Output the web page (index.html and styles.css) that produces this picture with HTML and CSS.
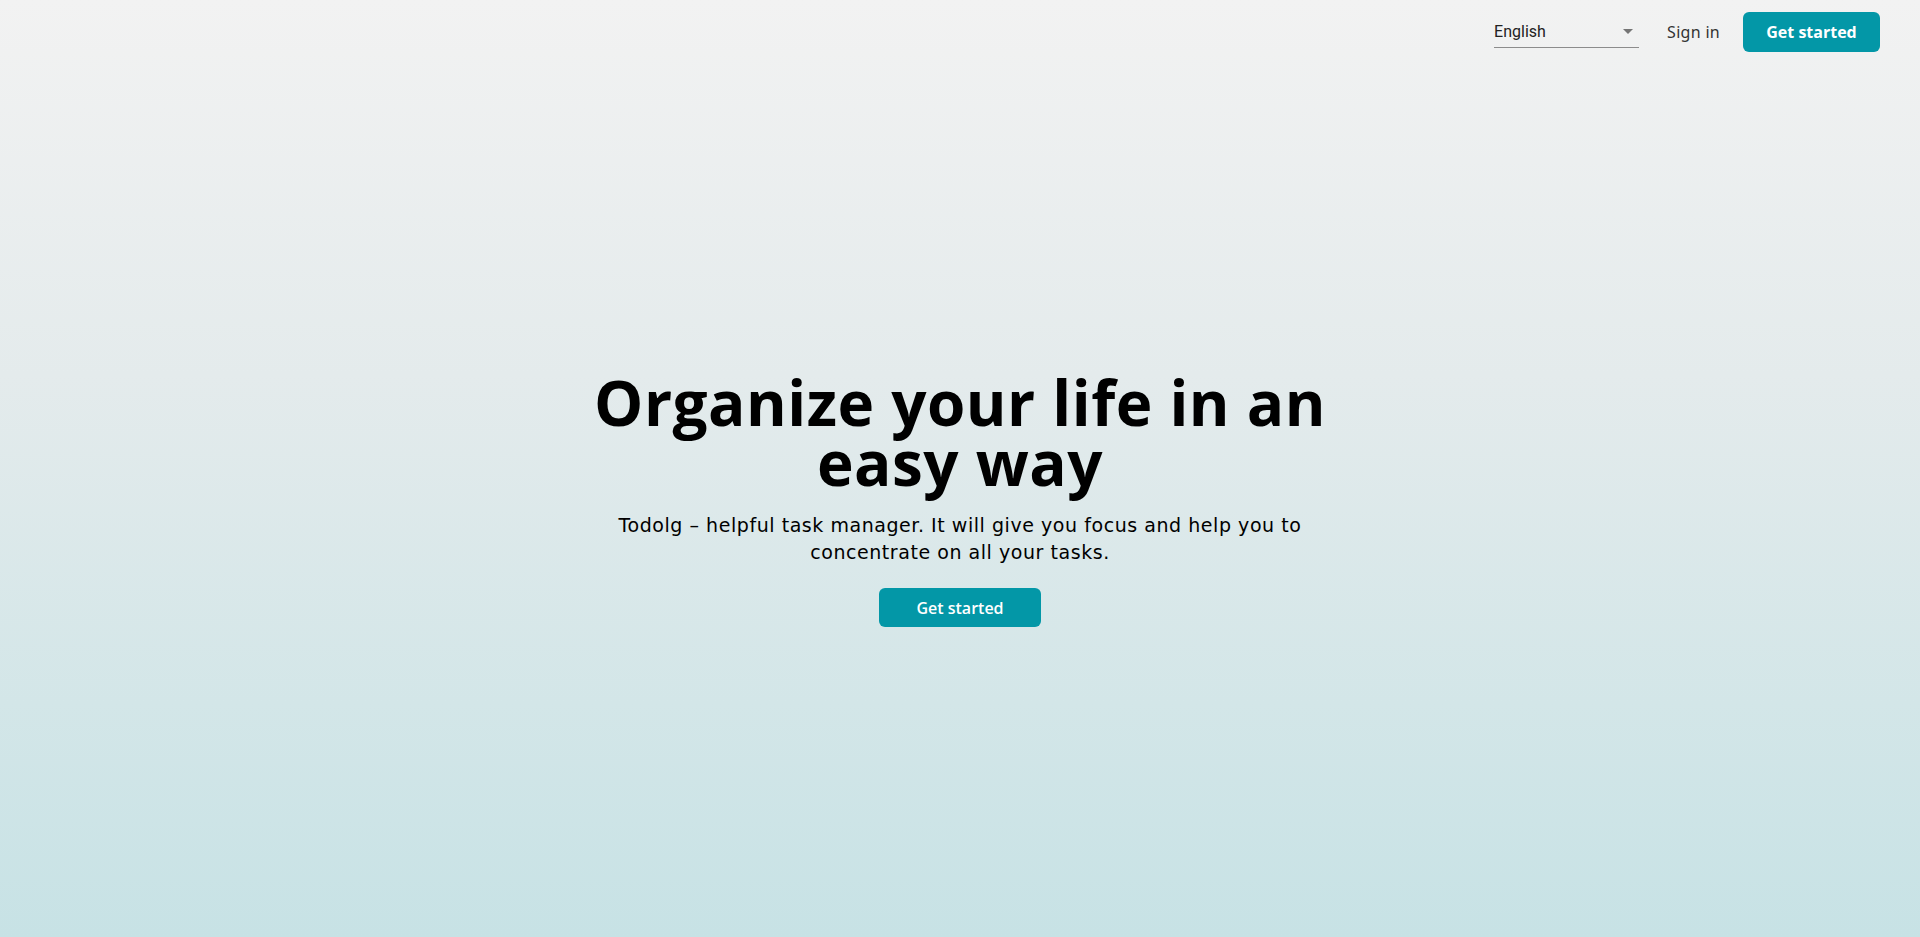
FILE: index.html
```html
<!DOCTYPE html>
<html lang="en">
<head>
<meta charset="utf-8">
<title>Todolg</title>
<link rel="stylesheet" href="styles.css">
</head>
<body>
<div class="page">
  <header class="topbar">
    <div class="lang-select">
      <span class="lang-value">English</span>
      <svg class="lang-arrow" width="10" height="5" viewBox="0 0 10 5"><path d="M0 0 L10 0 L5 5 Z" fill="#757575"/></svg>
    </div>
    <a class="signin" href="#">Sign in</a>
    <a class="btn btn-top" href="#">Get started</a>
  </header>
  <main class="hero">
    <h1 class="hero-title">Organize your life in an<br>easy way</h1>
    <p class="hero-text">Todolg – helpful task manager. It will give you focus and help you to<br>concentrate on all your tasks.</p>
    <a class="btn btn-hero" href="#">Get started</a>
  </main>
</div>
</body>
</html>
```
FILE: styles.css
```css
html, body {
  margin: 0;
  padding: 0;
  height: 100%;
}
body {
  font-family: "Open Sans", "Liberation Sans", sans-serif;
  color: #000;
  background: linear-gradient(180deg, #f2f2f2 0%, #e4ebec 40%, #d3e6e8 75%, #c7e2e5 100%);
}
.page {
  height: 100%;
  display: flex;
  flex-direction: column;
}
.topbar {
  height: 64px;
  box-sizing: border-box;
  padding: 12px 40px 0 0;
  display: flex;
  justify-content: flex-end;
  align-items: flex-start;
}
.lang-select {
  width: 145px;
  height: 36px;
  box-sizing: border-box;
  border-bottom: 1px solid #8c8c8c;
  display: flex;
  align-items: center;
  justify-content: space-between;
  padding: 4px 6px 0 0;
  margin-right: 28px;
  font-family: Roboto, "Liberation Sans", sans-serif;
  font-size: 16px;
  color: #222;
}
.signin {
  font-family: "Noto Sans", "Liberation Sans", sans-serif;
  font-size: 16px;
  color: #333;
  text-decoration: none;
  margin-right: 23px;
  line-height: 40px;
  letter-spacing: 0.3px;
}
.btn {
  display: inline-flex;
  align-items: center;
  justify-content: center;
  background: #0397a7;
  color: #fff;
  text-decoration: none;
  font-weight: 700;
  border-radius: 6px;
  font-family: "Open Sans", "Liberation Sans", sans-serif;
}
.btn-top {
  width: 137px;
  height: 40px;
  font-size: 16px;
}
.hero {
  flex: 1;
  display: flex;
  flex-direction: column;
  align-items: center;
  justify-content: center;
  text-align: center;
  padding-bottom: 2px;
}
.hero-title {
  margin: 0;
  font-family: "Open Sans", "Liberation Sans", sans-serif;
  font-weight: 700;
  font-size: 62px;
  line-height: 60px;
  letter-spacing: 0.5px;
}
.hero-text {
  margin: 20px 0 22px;
  font-family: "DejaVu Sans", "Noto Sans", sans-serif;
  font-size: 19px;
  line-height: 27px;
  letter-spacing: 0.55px;
}
.btn-hero {
  width: 162px;
  height: 39px;
  font-size: 16px;
  font-weight: 600;
}
```
